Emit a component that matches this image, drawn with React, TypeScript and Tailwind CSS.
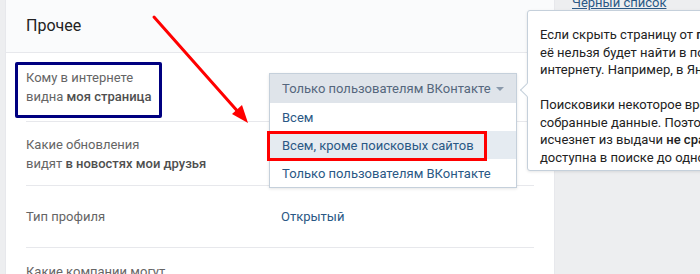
import React from 'react';

const options = ['Всем', 'Всем, кроме поисковых сайтов', 'Только пользователям ВКонтакте'];

function Row({ label, children, className }: { label: React.ReactNode; children?: React.ReactNode; className: string }) {
  return (
    <div className={`mx-5 flex border-b border-[#e7e8ec] ${className}`}>
      <div className="w-[255px] shrink-0 text-[13px] leading-[19px] text-[#656565]">{label}</div>
      <div className="relative flex-1 text-[13px] leading-[19px] text-[#2a5885]">{children}</div>
    </div>
  );
}

export default function App() {
  return (
    <div
      className="relative flex h-[274px] w-[700px] overflow-hidden bg-[#edeef0]"
      style={{ fontFamily: 'Roboto, "Noto Sans", sans-serif' }}
    >
      {/* Settings card */}
      <div className="ml-[5px] w-[550px] shrink-0 border-x border-[#e7e8ec] bg-white">
        <div className="flex h-[53px] items-center border-b border-[#e7e8ec] bg-[#fafbfc] pl-5 text-[16px] text-[#222]">
          Прочее
        </div>

        <Row
          className="h-[69px] items-center"
          label={
            <>
              Кому в интернете
              <br />
              видна <span className="font-medium text-[#4f4f4f]">моя страница</span>
            </>
          }
        >
          {/* Open select */}
          <div className="absolute left-[-12px] top-[-14px] z-10 w-[248px] border border-[#c5d0db] bg-white shadow-[0_1px_3px_rgba(0,0,0,0.1)]">
            <div className="flex h-[29px] items-center justify-between bg-[#dfe4ea] px-3 text-[#55677d]">
              <span>Только пользователям ВКонтакте</span>
              <span className="h-0 w-0 border-x-[4px] border-t-[4px] border-x-transparent border-t-[#8a99ab]" />
            </div>
            {options.map((o, i) => (
              <div
                key={o}
                className={`flex h-[28px] items-center px-3 text-[#2a5885] ${i === 1 ? 'bg-[#e5ebf1]' : ''}`}
              >
                {o}
              </div>
            ))}
          </div>
        </Row>

        <Row
          className="h-[64px] items-center"
          label={
            <>
              Какие обновления
              <br />
              видят <span className="font-medium text-[#4f4f4f]">в новостях мои друзья</span>
            </>
          }
        />

        <Row className="h-[62px] items-center" label="Тип профиля">
          Открытый
        </Row>

        <div className="mx-5 pt-[14px] text-[13px] leading-[19px] text-[#656565]">Какие компании могут</div>
      </div>

      {/* Right menu */}
      <div className="flex-1 pl-[17px]">
        <div className="-mt-[7px] text-[13px] leading-[19px] text-[#2a5885] underline">Чёрный список</div>
      </div>

      {/* Tooltip */}
      <div className="absolute left-[527px] top-[10px] z-20 h-[161px] w-[300px] rounded-[3px] border border-[#c5d0db] bg-white pl-[12px] pt-[15px] text-[13px] leading-[17.5px] text-[#222] shadow-[0_1px_3px_rgba(0,0,0,0.1)]">
        <div className="absolute left-[-6px] top-[74px] h-[10px] w-[10px] rotate-45 border-b border-l border-[#c5d0db] bg-white" />
        <p className="whitespace-nowrap">
          Если скрыть страницу от <b className="font-medium">поисковых сайтов</b>,
          <br />
          её нельзя будет найти в поиске по
          <br />
          интернету. Например, в Яндексе.
        </p>
        <p className="mt-[17.5px] whitespace-nowrap">
          Поисковики некоторое время хранят
          <br />
          собранные данные. Поэтому страница
          <br />
          исчезнет из выдачи <b className="font-medium">не сразу</b> и будет
          <br />
          доступна в поиске до одной недели.
        </p>
      </div>

      {/* Annotations */}
      <div className="absolute left-[15px] top-[62px] z-30 h-[56px] w-[147px] rounded-[2px] border-[3px] border-[#000080]" />
      <div className="absolute left-[267px] top-[131px] z-30 h-[30px] w-[220px] border-[3px] border-[#ff0000]" />
      <svg className="absolute left-0 top-0 z-30" width="700" height="274" viewBox="0 0 700 274">
        <line x1="154" y1="17" x2="240" y2="114" stroke="#ff0000" strokeWidth="3" strokeLinecap="round" />
        <polygon points="248,123 232,114 242,105" fill="#ff0000" />
      </svg>
    </div>
  );
}
